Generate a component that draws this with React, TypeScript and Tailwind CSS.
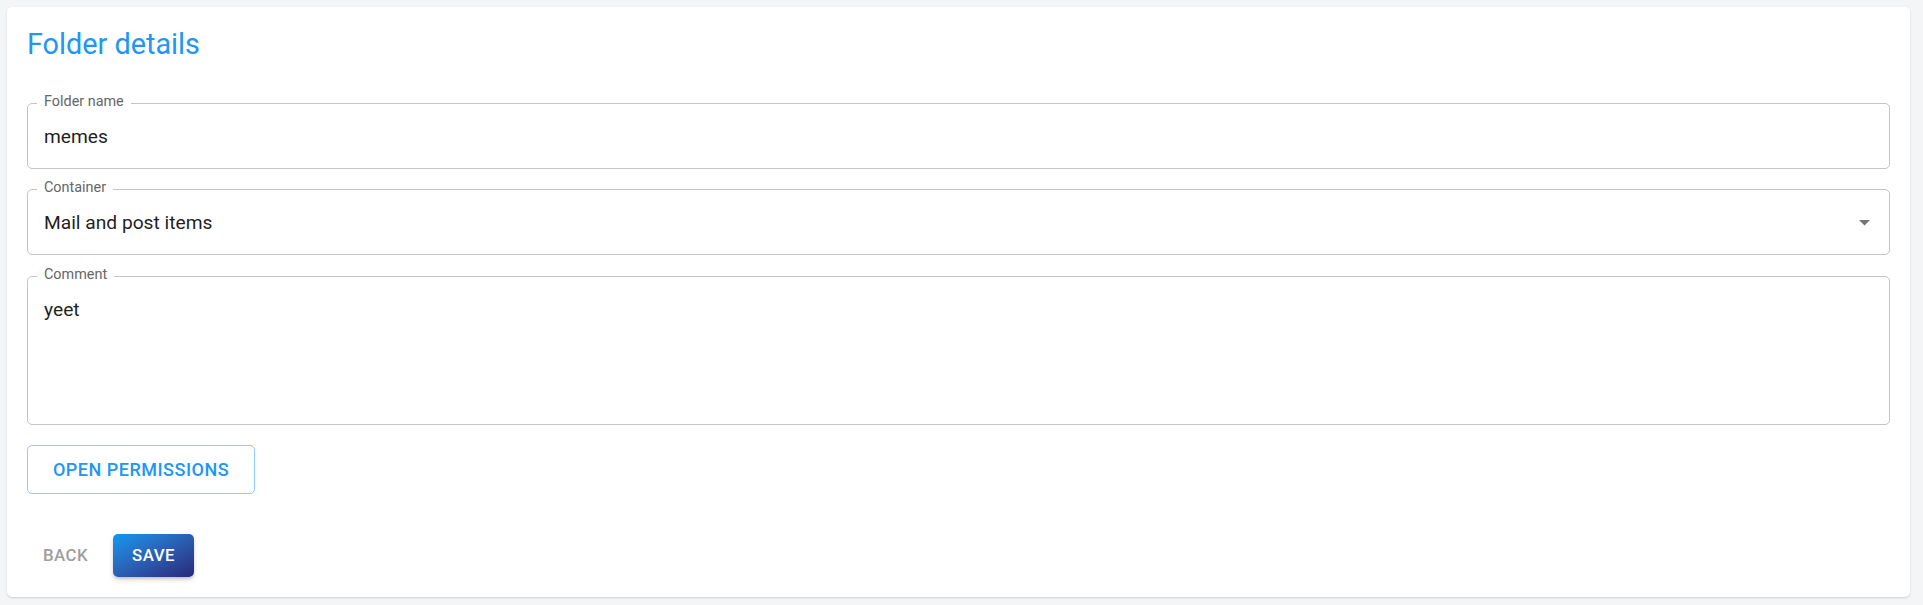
import React from "react";

const font = { fontFamily: "Roboto, 'Liberation Sans', sans-serif" };

function Label({ text }: { text: string }) {
  return (
    <span className="absolute left-[9px] -top-[11px] bg-white px-[7px] text-[14.4px] leading-[18px] text-[#666666]">
      {text}
    </span>
  );
}

export default function App() {
  return (
    <div className="h-[605px] w-full overflow-hidden bg-[#f4f5f7]" style={font}>
      <div className="ml-[7px] mt-[7px] flex h-[590px] w-[1903px] flex-col rounded-[5px] bg-white px-[20px] pt-[18px] shadow-[0_1px_3px_0_rgba(0,0,0,0.1),0_1px_1px_0_rgba(0,0,0,0.06)]">
        <h1 className="text-[28.8px] font-normal leading-[38.4px] text-[#2196f3]">Folder details</h1>

        <div className="relative mt-[39.6px] box-border h-[66px] rounded-[5px] border border-[#c4c4c4] pl-[16px] pt-[19.5px]">
          <Label text="Folder name" />
          <div className="text-[19.2px] leading-[26px] text-[#1f1f1f]">memes</div>
        </div>

        <div className="relative mt-[20px] box-border flex h-[66px] rounded-[5px] border border-[#c4c4c4] pl-[16px] pr-[19px] pt-[19.5px]">
          <Label text="Container" />
          <div className="flex-1 text-[19.2px] leading-[26px] text-[#1f1f1f]">Mail and post items</div>
          <svg width="11" height="6" viewBox="0 0 11 6" className="mt-[10.5px]">
            <path d="M0 0 L11 0 L5.5 5.5 Z" fill="#757575" />
          </svg>
        </div>

        <div className="relative mt-[21px] box-border h-[149px] rounded-[5px] border border-[#c4c4c4] pl-[16px] pt-[19.5px]">
          <Label text="Comment" />
          <div className="text-[19.2px] leading-[26px] text-[#1f1f1f]">yeet</div>
        </div>

        <div className="mt-[20px] flex">
          <button className="box-border flex h-[49px] w-[228px] items-center justify-center rounded-[5px] border border-[#90cbf9] bg-white text-[18px] font-medium uppercase tracking-[0.5px] text-[#2196f3]">
            Open permissions
          </button>
        </div>

        <div className="mt-[40px] flex items-center gap-[9px]">
          <button className="flex h-[43px] w-[77px] items-center justify-center text-[16.8px] font-medium uppercase tracking-[0.48px] text-[#9e9e9e]">
            Back
          </button>
          <button className="flex h-[43px] w-[81px] items-center justify-center rounded-[5px] bg-linear-to-br from-[#0399f0] to-[#28287a] text-[16.8px] font-medium uppercase tracking-[0.48px] text-white shadow-[0_3px_6px_-1px_rgba(0,0,0,0.18),0_2px_2px_0_rgba(0,0,0,0.1)]">
            Save
          </button>
        </div>
      </div>
    </div>
  );
}
